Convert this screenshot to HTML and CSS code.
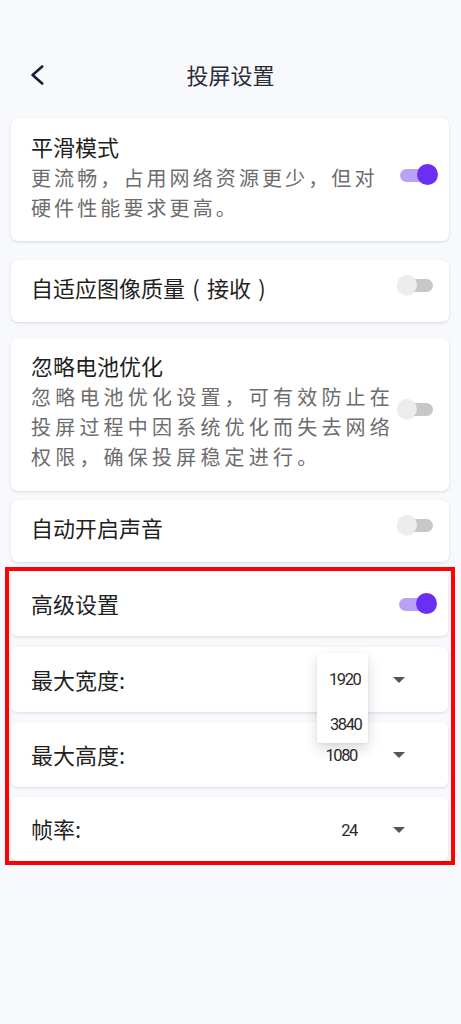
FILE: index.html
```html
<!DOCTYPE html>
<html lang="zh-CN">
<head>
<meta charset="utf-8">
<title>投屏设置</title>
<link rel="stylesheet" href="styles.css">
</head>
<body>
<header class="topbar">
  <div class="topbar-left">
    <svg class="back" width="14" height="20" viewBox="0 0 14 20"><polyline points="12.2,1.5 2.6,10 12.2,18.5" fill="none" stroke="#1d1b35" stroke-width="2.6" stroke-linecap="round" stroke-linejoin="round"/></svg>
  </div>
  <h1 class="topbar-title">投屏设置</h1>
  <div></div>
</header>

<main class="list">
  <div class="card card-smooth">
    <div class="card-text">
      <div class="card-title">平滑模式</div>
      <div class="card-desc desc-a">更流畅，占用网络资源更少，但对<br>硬件性能要求更高。</div>
    </div>
    <div class="toggle on"><span class="track"></span><span class="thumb"></span></div>
  </div>

  <div class="card card-adapt">
    <div class="card-text">
      <div class="card-title">自适应图像质量<span class="paren">(</span>接收<span class="paren">)</span></div>
    </div>
    <div class="toggle"><span class="track"></span><span class="thumb"></span></div>
  </div>

  <div class="card card-battery">
    <div class="card-text">
      <div class="card-title">忽略电池优化</div>
      <div class="card-desc desc-b">忽略电池优化设置，可有效防止在<br>投屏过程中因系统优化而失去网络<br>权限，确保投屏稳定进行。</div>
    </div>
    <div class="toggle"><span class="track"></span><span class="thumb"></span></div>
  </div>

  <div class="card card-sound">
    <div class="card-text">
      <div class="card-title">自动开启声音</div>
    </div>
    <div class="toggle"><span class="track"></span><span class="thumb"></span></div>
  </div>

  <section class="advanced">
    <div class="card card-adv">
      <div class="card-text">
        <div class="card-title">高级设置</div>
      </div>
      <div class="toggle on"><span class="track"></span><span class="thumb"></span></div>
    </div>

    <div class="card select-row row-width">
      <div class="select-label">最大宽度:</div>
      <div class="select-value"></div>
      <span class="caret"></span>
      <div class="menu">
        <div class="menu-item item-1">1920</div>
        <div class="menu-item item-2">3840</div>
      </div>
    </div>

    <div class="card select-row row-height">
      <div class="select-label">最大高度:</div>
      <div class="select-value">1080</div>
      <span class="caret"></span>
    </div>

    <div class="card select-row row-fps">
      <div class="select-label">帧率:</div>
      <div class="select-value">24</div>
      <span class="caret"></span>
    </div>
  </section>
</main>
</body>
</html>
```

FILE: styles.css
```css
html, body {
  margin: 0;
  padding: 0;
}
body {
  width: 461px;
  min-height: 1024px;
  background: #f8f9fc;
  font-family: "Noto Sans CJK SC", "Noto Sans", sans-serif;
  color: #222;
}

.topbar {
  display: grid;
  grid-template-columns: 1fr auto 1fr;
  align-items: center;
  height: 40px;
  padding-top: 55px;
}
.topbar-left {
  display: flex;
  align-items: center;
  padding-left: 30px;
}
.back {
  display: block;
  margin-top: -1px;
}
.topbar-title {
  margin: 0;
  font-size: 22px;
  font-weight: 400;
  line-height: 30px;
  color: #2c2c36;
  margin-top: -2px;
}

.list {
  display: flex;
  flex-direction: column;
  padding: 23px 12px 0 11px;
}

.card {
  position: relative;
  display: flex;
  align-items: center;
  flex-shrink: 0;
  background: #fff;
  border-radius: 7px;
  box-shadow: 0 1px 3px rgba(0, 0, 0, 0.13);
  padding: 12px 11px 20px 20px;
}
.card-text {
  flex: 1;
  min-width: 0;
}
.card-title {
  font-size: 22px;
  line-height: 30px;
  color: #1f1f1f;
  white-space: nowrap;
}
.paren {
  display: inline-block;
  width: 22px;
  text-align: center;
}
.card-desc {
  font-size: 20px;
  line-height: 30px;
  color: #6c6c6c;
  margin-top: 2px;
  white-space: nowrap;
}
.desc-a { letter-spacing: 3.1px; }
.desc-b { letter-spacing: 4.2px; }

.card-smooth { padding-top: 13px; padding-bottom: 18px; }
.card-adapt { margin-top: 19px; }
.card-battery { margin-top: 16px; padding-bottom: 19px; }
.card-sound { margin-top: 9px; }

/* toggle switch */
.toggle {
  position: relative;
  width: 41px;
  height: 21px;
  flex: none;
  margin-bottom: 4px;
}
.toggle .track {
  position: absolute;
  left: 3px;
  top: 4px;
  width: 33px;
  height: 13px;
  border-radius: 7px;
  background: #c7c7c7;
}
.toggle .thumb {
  position: absolute;
  left: 0;
  top: 0;
  width: 20px;
  height: 20px;
  border-radius: 50%;
  background: #ececec;
  box-shadow: 0 1px 1px rgba(0, 0, 0, 0.06);
}
.toggle.on .track { background: #b9a1f6; }
.toggle.on .thumb {
  left: 20px;
  width: 21px;
  height: 21px;
  top: -0.5px;
  background: #6b2ef3;
  box-shadow: none;
}

/* advanced section */
.advanced {
  display: flex;
  flex-direction: column;
  margin: 5px -6px 0 -6px;
  border: 4px solid #ff0000;
  padding: 1px 3px 0 2px;
}
.card-adv {
  height: 64px;
  box-sizing: border-box;
  padding-top: 0;
  padding-bottom: 0;
  border-radius: 6px;
}
.card-adv .card-title { margin-top: -2px; }
.card-adv .toggle { margin-bottom: 0; }

.select-row {
  padding: 0 43px 0 20px;
  height: 65px;
  box-sizing: border-box;
  border-radius: 6px;
}
.row-width { margin-top: 11px; }
.row-height { margin-top: 10px; }
.row-fps { margin-top: 10px; height: 64px; }
.select-label {
  flex: 1;
  font-size: 22px;
  line-height: 30px;
  color: #1f1f1f;
  margin-top: -2px;
}
.select-value {
  font-family: Roboto, "Liberation Sans", sans-serif;
  font-size: 16.5px;
  letter-spacing: -1.4px;
  color: #2b2b2b;
  margin-right: 36px;
  margin-top: 2px;
}
.caret {
  width: 0;
  height: 0;
  border-left: 6px solid transparent;
  border-right: 6px solid transparent;
  border-top: 6px solid #555;
  margin-top: 1px;
}

.menu {
  position: absolute;
  left: 306px;
  top: 6px;
  width: 51px;
  height: 90px;
  background: #fff;
  border-radius: 3px;
  box-shadow: 0 6px 14px rgba(0, 0, 0, 0.14), 0 1px 3px rgba(0, 0, 0, 0.06);
  z-index: 2;
}
.menu-item {
  position: absolute;
  left: 12px;
  font-family: Roboto, "Liberation Sans", sans-serif;
  font-size: 16.5px;
  letter-spacing: -1.4px;
  line-height: 20px;
  color: #2b2b2b;
}
.item-1 { top: 17px; }
.item-2 { top: 62px; left: 13px; }
```
